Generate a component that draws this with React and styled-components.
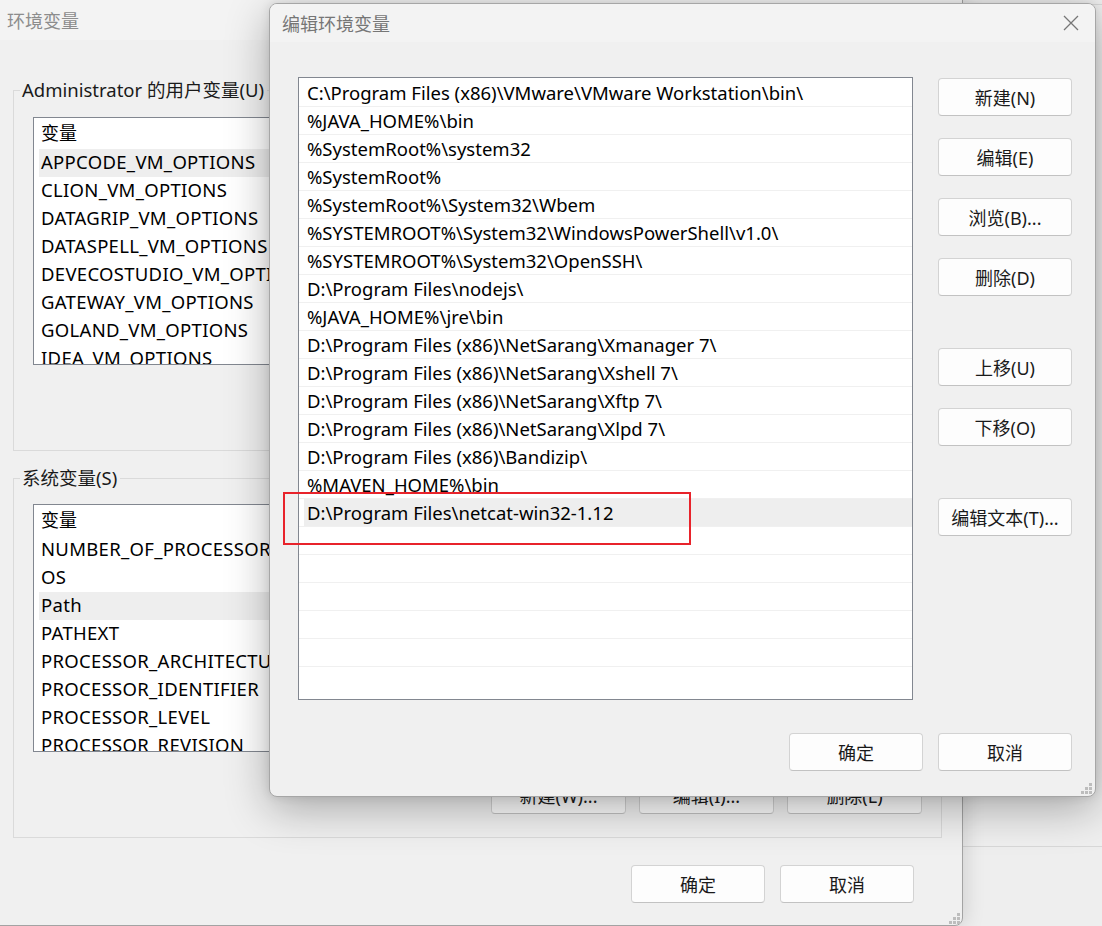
import React from "react";
import styled, { createGlobalStyle } from "styled-components";

const FONT = `"Noto Sans", "Noto Sans CJK SC", sans-serif`;

const Global = createGlobalStyle`
  html, body { margin: 0; padding: 0; background: #eeeeee; overflow: hidden; }
  body { font-family: ${FONT}; -webkit-font-smoothing: antialiased; }
  * { box-sizing: border-box; }
`;

const Desktop = styled.div`
  position: relative;
  width: 1102px;
  height: 926px;
  overflow: hidden;
  background: #eeeeee;
  font-family: ${FONT};
`;

const BehindWindow = styled.div`
  position: absolute;
  left: 955px;
  top: 4px;
  width: 220px;
  height: 843px;
  background: #efefef;
  border: 1px solid #d8d8d8;
  border-radius: 8px 0 0 0;
`;

const BackWindow = styled.div`
  position: absolute;
  left: -1px;
  top: -1px;
  width: 964px;
  height: 927px;
  background: #f0f0f0;
  border: 1px solid #a3a3a3;
  border-radius: 0 0 8px 0;
  box-shadow: 0 0 22px rgba(0, 0, 0, 0.16);
  display: flex;
  flex-direction: column;
`;

const TitleBar = styled.div`
  height: ${(p) => p.$h}px;
  padding-left: ${(p) => p.$pl}px;
  display: flex;
  align-items: center;
  justify-content: space-between;
  background: #f3f3f3;
  font-size: 18px;
  color: ${(p) => p.$color};
  flex-shrink: 0;
`;

const BackBody = styled.div`
  padding: 38px 20px 0 13px;
  display: flex;
  flex-direction: column;
`;

const Group = styled.fieldset`
  margin: ${(p) => p.$mt}px 0 0 0;
  padding: 0;
  border: 1px solid #dadada;
  min-width: 0;
`;

const Legend = styled.legend`
  margin-left: 6px;
  padding: 0 3px 0 2px;
  font-size: 18.5px;
  line-height: 24px;
  height: 24px;
  color: #1a1a1a;
`;

const GroupInner = styled.div`
  padding: ${(p) => p.$pt}px 19px ${(p) => p.$pb}px 19px;
  display: flex;
  flex-direction: column;
`;

const VarList = styled.div`
  width: 889px;
  height: 248px;
  background: #ffffff;
  border: 1px solid #828790;
  overflow: hidden;
  display: flex;
  flex-direction: column;
`;

const VarHeader = styled.div`
  height: 31px;
  flex-shrink: 0;
  padding-left: 7px;
  font-size: 18px;
  line-height: 31px;
  color: #000;
`;

const VarRow = styled.div`
  height: 28px;
  flex-shrink: 0;
  margin-left: 5px;
  padding-left: 2px;
  font-size: 18.5px;
  letter-spacing: 0.3px;
  line-height: 26px;
  color: #000;
  white-space: nowrap;
  background: ${(p) => (p.$selected ? "#eeeeee" : "transparent")};
`;

const ButtonRow = styled.div`
  display: flex;
  justify-content: flex-end;
  gap: ${(p) => p.$gap}px;
  margin-top: ${(p) => p.$mt}px;
  margin-right: ${(p) => p.$mr || 0}px;
`;

const Button = styled.button`
  width: ${(p) => p.$w || 134}px;
  height: 38px;
  padding: 0;
  background: #fdfdfd;
  border: 1px solid #d3d3d3;
  border-bottom-color: #c2c2c2;
  border-radius: 4px;
  font-family: ${FONT};
  font-size: 18px;
  color: #1a1a1a;
  flex-shrink: 0;
`;

const Dialog = styled.div`
  position: absolute;
  left: 269px;
  top: 3px;
  width: 827px;
  height: 794px;
  background: #f0f0f0;
  border: 1px solid #a6a6a6;
  border-radius: 8px;
  box-shadow: 0 12px 44px rgba(0, 0, 0, 0.3), 0 0 10px rgba(0, 0, 0, 0.1);
  display: flex;
  flex-direction: column;
  overflow: hidden;
`;

const CloseBtn = styled.div`
  width: 46px;
  height: 38px;
  display: flex;
  align-items: center;
  justify-content: center;
  margin-right: 1px;
`;

const DialogMain = styled.div`
  display: flex;
  padding: 35px 23px 0 28px;
  gap: 25px;
`;

const PathList = styled.div`
  width: 615px;
  height: 623px;
  background: #ffffff;
  border: 1px solid #828790;
  overflow: hidden;
  display: flex;
  flex-direction: column;
`;

const PathRow = styled.div`
  height: 28px;
  flex-shrink: 0;
  display: flex;
  padding-left: 5px;
  &:first-child {
    padding-top: 1px;
  }
  & + & {
    border-top: 1px solid #f0f0f0;
  }
`;

const PathText = styled.div`
  flex: 1;
  padding-left: 3px;
  font-size: 18.5px;
  line-height: 27px;
  color: #000;
  white-space: nowrap;
  background: ${(p) => (p.$selected ? "#eeeeee" : "transparent")};
`;

const SideButtons = styled.div`
  display: flex;
  flex-direction: column;
  width: 134px;
  padding-top: 1px;
`;

const SideButton = styled(Button)`
  margin-top: ${(p) => p.$mt}px;
`;

const Grip = styled.svg`
  position: absolute;
  right: ${(p) => p.$r}px;
  bottom: ${(p) => p.$b}px;
`;

const Highlight = styled.div`
  position: absolute;
  left: 283px;
  top: 492px;
  width: 408px;
  height: 53px;
  border: 2.5px solid #e8232b;
`;

const userVars = [
  "APPCODE_VM_OPTIONS",
  "CLION_VM_OPTIONS",
  "DATAGRIP_VM_OPTIONS",
  "DATASPELL_VM_OPTIONS",
  "DEVECOSTUDIO_VM_OPTIONS",
  "GATEWAY_VM_OPTIONS",
  "GOLAND_VM_OPTIONS",
  "IDEA_VM_OPTIONS",
];

const sysVars = [
  "NUMBER_OF_PROCESSORS",
  "OS",
  "Path",
  "PATHEXT",
  "PROCESSOR_ARCHITECTURE",
  "PROCESSOR_IDENTIFIER",
  "PROCESSOR_LEVEL",
  "PROCESSOR_REVISION",
];

const paths = [
  "C:\\Program Files (x86)\\VMware\\VMware Workstation\\bin\\",
  "%JAVA_HOME%\\bin",
  "%SystemRoot%\\system32",
  "%SystemRoot%",
  "%SystemRoot%\\System32\\Wbem",
  "%SYSTEMROOT%\\System32\\WindowsPowerShell\\v1.0\\",
  "%SYSTEMROOT%\\System32\\OpenSSH\\",
  "D:\\Program Files\\nodejs\\",
  "%JAVA_HOME%\\jre\\bin",
  "D:\\Program Files (x86)\\NetSarang\\Xmanager 7\\",
  "D:\\Program Files (x86)\\NetSarang\\Xshell 7\\",
  "D:\\Program Files (x86)\\NetSarang\\Xftp 7\\",
  "D:\\Program Files (x86)\\NetSarang\\Xlpd 7\\",
  "D:\\Program Files (x86)\\Bandizip\\",
  "%MAVEN_HOME%\\bin",
  "D:\\Program Files\\netcat-win32-1.12",
];

const rows = [...paths, ...Array(22 - paths.length).fill("")];

const sideButtons = [
  { label: "新建(N)", mt: 0 },
  { label: "编辑(E)", mt: 22 },
  { label: "浏览(B)...", mt: 22 },
  { label: "删除(D)", mt: 22 },
  { label: "上移(U)", mt: 52 },
  { label: "下移(O)", mt: 22 },
  { label: "编辑文本(T)...", mt: 52 },
];

const ResizeGrip = ({ r, b }) => (
  <Grip $r={r} $b={b} width="11" height="11" viewBox="0 0 11 11">
    <g fill="#bdbdbd">
      <rect x="8" y="0" width="3" height="3" />
      <rect x="4" y="4" width="3" height="3" />
      <rect x="8" y="4" width="3" height="3" />
      <rect x="0" y="8" width="3" height="3" />
      <rect x="4" y="8" width="3" height="3" />
      <rect x="8" y="8" width="3" height="3" />
    </g>
  </Grip>
);

export default function App() {
  return (
    <Desktop>
      <Global />
      <BehindWindow />
      <BackWindow>
        <TitleBar $h={40} $pl={7} $color="#8c8c8c">
          环境变量
        </TitleBar>
        <BackBody>
          <Group $mt={0}>
            <Legend>Administrator 的用户变量(U)</Legend>
            <GroupInner $pt={15} $pb={85}>
              <VarList>
                <VarHeader>变量</VarHeader>
                {userVars.map((v, i) => (
                  <VarRow key={v} $selected={i === 0}>
                    {v}
                  </VarRow>
                ))}
              </VarList>
            </GroupInner>
          </Group>
          <Group $mt={15}>
            <Legend>系统变量(S)</Legend>
            <GroupInner $pt={14} $pb={23}>
              <VarList>
                <VarHeader>变量</VarHeader>
                {sysVars.map((v) => (
                  <VarRow key={v} $selected={v === "Path"}>
                    {v}
                  </VarRow>
                ))}
              </VarList>
              <ButtonRow $gap={13} $mt={24}>
                <Button $w={135}>新建(W)...</Button>
                <Button $w={135}>编辑(I)...</Button>
                <Button $w={135}>删除(L)</Button>
              </ButtonRow>
            </GroupInner>
          </Group>
          <ButtonRow $gap={15} $mt={27} $mr={28}>
            <Button>确定</Button>
            <Button>取消</Button>
          </ButtonRow>
        </BackBody>
        <ResizeGrip r={2} b={1} />
      </BackWindow>

      <Dialog>
        <TitleBar $h={38} $pl={12} $color="#767676">
          编辑环境变量
          <CloseBtn>
            <svg width="16" height="16" viewBox="0 0 16 16">
              <path d="M1 1 L15 15 M15 1 L1 15" stroke="#767676" strokeWidth="1.3" fill="none" />
            </svg>
          </CloseBtn>
        </TitleBar>
        <DialogMain>
          <PathList>
            {rows.map((p, i) => (
              <PathRow key={i}>
                <PathText $selected={i === 15}>{p}</PathText>
              </PathRow>
            ))}
          </PathList>
          <SideButtons>
            {sideButtons.map((b) => (
              <SideButton key={b.label} $mt={b.mt}>
                {b.label}
              </SideButton>
            ))}
          </SideButtons>
        </DialogMain>
        <ButtonRow $gap={15} $mt={33} $mr={23}>
          <Button>确定</Button>
          <Button>取消</Button>
        </ButtonRow>
        <ResizeGrip r={3} b={2} />
      </Dialog>

      <Highlight />
    </Desktop>
  );
}
